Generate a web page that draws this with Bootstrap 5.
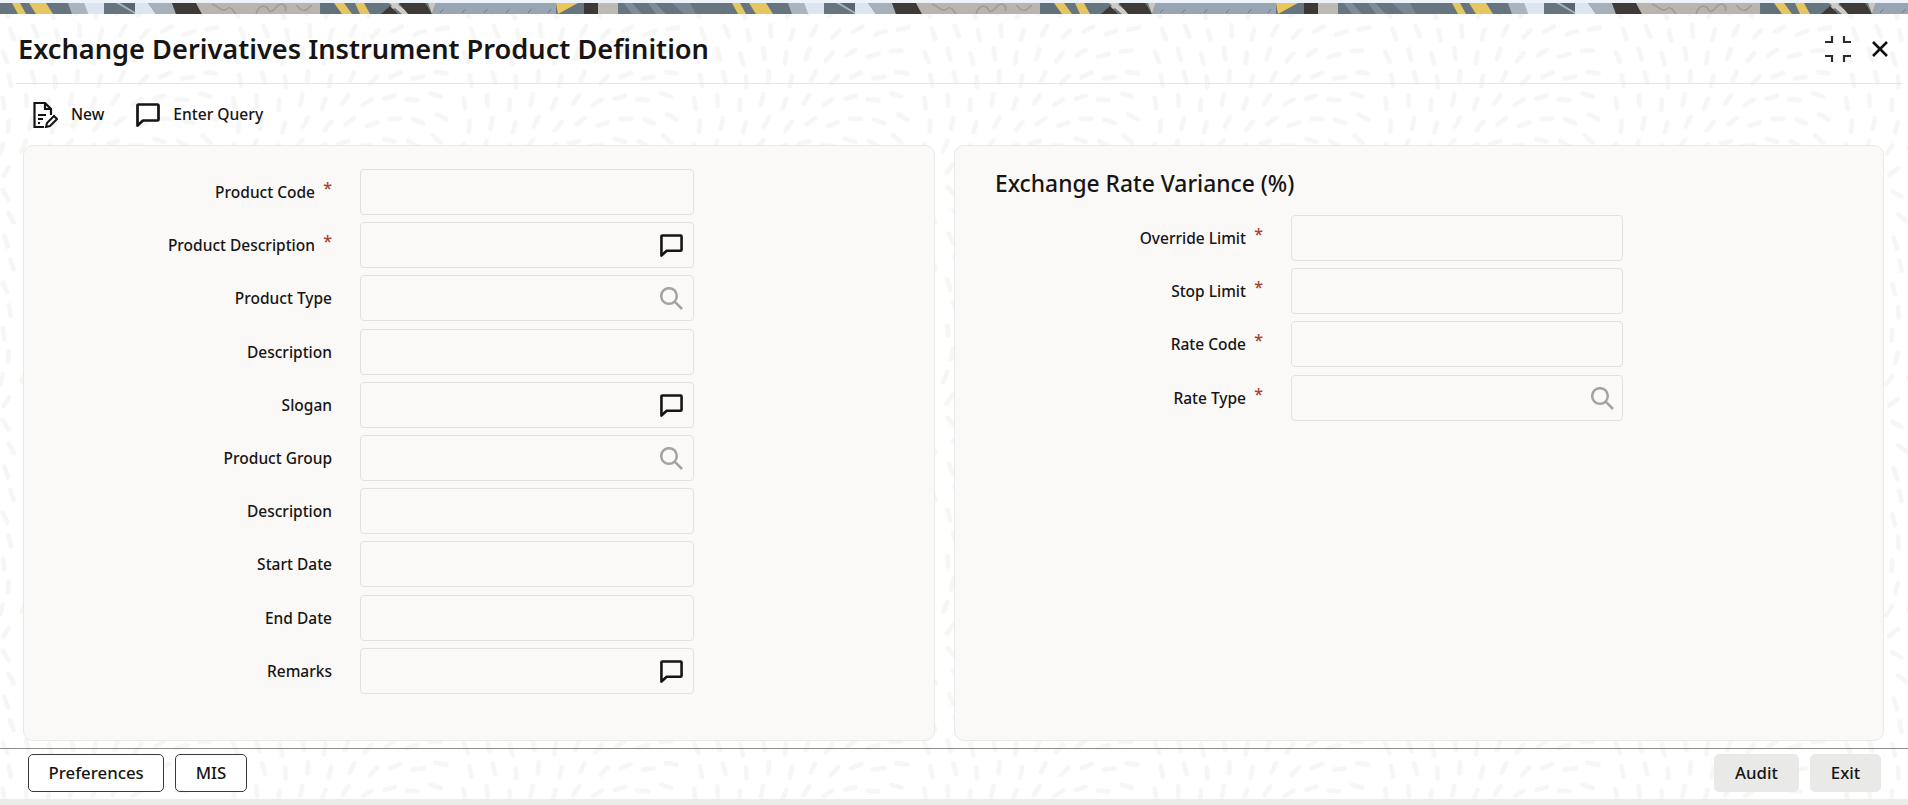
<!DOCTYPE html>
<html lang="en">
<head>
<meta charset="utf-8">
<title>Exchange Derivatives Instrument Product Definition</title>
<link href="https://cdn.jsdelivr.net/npm/bootstrap@5.3.0/dist/css/bootstrap.min.css" rel="stylesheet">
<style>
html{height:805px;overflow:hidden;background:#fff;}
body{height:805px;overflow:hidden;background:transparent;font-family:"Noto Sans","Open Sans",sans-serif;color:#161513;display:flex;flex-direction:column;}
.texture{position:absolute;top:0;left:0;width:100%;height:100%;z-index:-1;}
.strip-top{height:3px;background:#eef2f9;flex:none;}
.strip-art{display:block;width:100%;height:11px;flex:none;}
.head-bar{height:70px;margin:0 6px 0 16px;border-bottom:1px solid #e6e5e2;flex:none;padding-left:2px;padding-right:14px;}
.page-title{font-size:27.2px;font-weight:600;margin:2px 0 0;letter-spacing:0;color:#161513;}
.head-tools{gap:21px;}
.tool-bar{height:61px;padding-left:33px;gap:32px;flex:none;}
.tool-btn{font-size:15.6px;font-weight:500;color:#161513;gap:13px;background:none;border:0;padding:0;}
.panels{padding:0 24px 0 23px;gap:19px;height:596px;flex:none;}
.pane{background:#faf9f7;border:1px solid #ebe9e5;border-radius:10px;padding:23px 0 0 0;}
.pane-left{width:912px;flex:none;}
.pane-right{flex:1;}
.pane-head{font-size:22.8px;font-weight:500;margin:0 0 0 40px;height:46px;line-height:30px;color:#161513;}
.field-list{display:flex;flex-direction:column;gap:7.2px;}
.field-row{display:flex;align-items:center;}
.field-label{width:308px;display:flex;justify-content:flex-end;font-size:15.5px;font-weight:500;line-height:22px;margin:0;flex:none;}
.req-star{color:#a8402e;width:17px;text-align:right;font-size:16px;line-height:16px;align-self:flex-start;margin-top:-1px;font-weight:500;}
.field-box{width:334px;margin-left:28px;flex:none;position:relative;}
.pane-right .field-box{width:332px;}
.field-box .form-control{height:46px;background:#faf9f7;border:1px solid #e3e1dd;border-radius:4px;box-shadow:none;}
.field-icon{position:absolute;right:11px;top:12px;width:23px;height:23px;}
.pane-right .field-icon{right:9px;}
.foot-bar{border-top:1px solid #8d8c8a;margin-top:7px;height:51px;padding:5px 27px 0 28px;flex:none;}
.foot-gap{gap:11px;}
.foot-btn{height:38px;font-size:16.8px;font-weight:500;line-height:1;border-radius:5px;padding:0 19.5px;color:#161513;}
.foot-outline{background:#fff;border:1px solid #3b3a38;}
.foot-soft{background:#e9e9e7;border:1px solid #e9e9e7;padding:0;}
.foot-audit{width:85px;}
.foot-exit{width:71px;}
.strip-bottom{height:6px;background:#ececeb;flex:none;}
</style>
</head>
<body>
<svg class="texture" aria-hidden="true">
  <defs>
    <pattern id="dashes" width="320" height="320" patternUnits="userSpaceOnUse" patternTransform="scale(.72)">
      <path fill="none" stroke="#f6f6f5" stroke-width="6.500" stroke-linecap="round" d="
      M6 8l5 15M38 4l6 14M70 10l5 15M104 3l2 16M136 9l-3 15M168 5l-6 14M200 10l-8 12M232 4l-11 9M264 9l-13 7M298 6l-14 5
      M14 40l5 14M46 36l6 15M78 42l3 14M110 35l1 16M142 41l-4 14M174 36l-7 13M206 42l-10 10M238 37l-13 7M270 43l-14 5M302 38l-15 3
      M4 72l6 14M36 68l4 15M68 74l4 15M100 67l2 15M132 73l-2 15M164 68l-5 14M196 74l-9 11M228 69l-12 8M260 75l-15 4M292 70l-15 1
      M12 104l3 15M44 100l4 15M76 106l1 15M108 99l-1 15M140 105l-3 15M172 100l-6 13M204 106l-10 10M236 101l-14 6M268 107l-15 2M300 102l-15 -2
      M4 136l2 15M36 132l1 15M68 138l-1 15M100 131l-3 15M132 137l-5 14M164 132l-8 12M196 138l-12 8M228 133l-14 4M260 139l-15 -1M292 134l-14 -4
      M12 168l-1 15M44 164l-3 15M76 170l-4 14M108 163l-7 13M140 169l-9 12M172 164l-12 9M204 170l-14 5M236 165l-15 0M268 171l-14 -5M300 166l-13 -7
      M4 200l-4 14M36 196l-6 14M68 202l-8 12M100 195l-10 11M132 201l-13 7M164 196l-14 4M196 202l-15 0M228 197l-14 -4M260 203l-13 -7M292 198l-11 -10
      M12 232l-7 12M44 228l-9 12M76 234l-12 9M108 227l-14 5M140 233l-15 2M172 228l-15 -2M204 234l-13 -6M236 229l-11 -9M268 235l-9 -12M300 230l-7 -13
      M4 264l8 13M36 260l10 11M68 266l13 7M100 259l14 4M132 265l15 1M164 260l14 -3M196 266l11 -9M228 261l9 -12M260 267l6 -14M292 262l4 -15
      M12 296l7 13M44 292l9 12M76 298l12 9M108 291l14 5M140 297l15 1M172 292l13 -7M204 298l9 -12M236 293l6 -14M268 299l3 -15M300 294l1 -15"/>
    </pattern>
    <pattern id="bannerArt" width="720" height="11" patternUnits="userSpaceOnUse">
      <rect width="720" height="11" fill="#66757f"/>
      <polygon points="12,0 20,0 26,11 18,11" fill="#e6c660"/>
      <polygon points="29,0 46,0 53,11 36,11" fill="#e6c660"/>
      <polygon points="68,0 84,0 88,11 72,11" fill="#aab4bf"/>
      <polygon points="84,0 104,0 104,11 88,11" fill="#dce6f2"/>
      <polygon points="103,0 135,0 135,11 116,0" fill="#a9b2bc"/>
      <polygon points="120,0 135,0 135,9" fill="#58666f"/>
      <polygon points="135,0 148,0 156,11 135,11" fill="#dce6f2"/>
      <polygon points="148,0 172,0 176,11 156,11" fill="#a7b1bc"/>
      <polygon points="172,0 196,0 202,11 176,11" fill="#3f3a38"/>
      <polygon points="196,0 320,0 320,11 202,11" fill="#b9b5ae"/>
      <path fill="none" stroke="#9e9a94" stroke-width="1.5" d="M212 1c6 2 8 6 12 6s4-5 8-1l4 5M256 11c2-7 6-9 10-7s2 6 6 4 4-6 9-7c4 0 6 4 4 7M296 2c3 2 4 7 10 5l6-5"/>
      <polygon points="320,0 334,0 340,11 321,11" fill="#62727d"/>
      <polygon points="334,0 344,0 352,11 342,11" fill="#e6c660"/>
      <polygon points="355,0 364,0 370,11 360,11" fill="#e6c660"/>
      <polygon points="382,11 395,0 400,0 388,11" fill="#c9c5bd"/>
      <polygon points="381,11 390,3 398,11" fill="#3f3a38"/>
      <polygon points="389,0 396,0 410,11 402,11" fill="#cfcbc4"/>
      <polygon points="399,0 425,0 432,11 408,11" fill="#3e3a38"/>
      <polygon points="428,0 436,0 432,11" fill="#c9c5bd"/>
      <polygon points="436,0 556,0 556,11 432,11" fill="#98a5b4"/>
      <path fill="none" stroke="#6e7b89" stroke-width="1" stroke-dasharray="5 9" d="M440 10l8-9M462 10l8-9M484 10l8-9M506 10l8-9M528 10l8-9M548 10l5-6"/>
      <polygon points="556,0 578,0 558,11" fill="#e9c75c"/>
      <polygon points="584,0 598,0 598,11 584,11" fill="#3c3836"/>
      <polygon points="598,0 618,0 618,11 598,11" fill="#bdbab4"/>
      <polygon points="624,0 632,0 642,11 632,11" fill="#7f8d9a"/>
      <polygon points="648,0 655,0 666,11 656,11" fill="#7f8d9a"/>
      <polygon points="672,0 690,0 696,11 684,11" fill="#7a8895"/>
    </pattern>
  </defs>
  <rect y="14" width="100%" height="100%" fill="url(#dashes)"/>
</svg>

<div class="strip-top"></div>
<svg class="strip-art" aria-hidden="true"><rect width="100%" height="11" fill="url(#bannerArt)"/></svg>

<header class="head-bar d-flex align-items-center justify-content-between">
  <h1 class="page-title">Exchange Derivatives Instrument Product Definition</h1>
  <div class="head-tools d-flex align-items-center">
    <svg width="26" height="26" viewBox="0 0 26 26" fill="none" stroke="#2c2b29" stroke-width="2.200"><path d="M0 6h7V0M26 6h-7V0M0 20h7v6M26 20h-7v6"/></svg>
    <svg width="16" height="16" viewBox="0 0 16 16" fill="none" stroke="#111" stroke-width="2.600"><path d="M1 1l14 14M15 1L1 15"/></svg>
  </div>
</header>

<nav class="tool-bar d-flex align-items-center">
  <button type="button" class="tool-btn d-flex align-items-center">
    <svg width="25" height="26" viewBox="0 0 25 26" fill="none" stroke="#161513" stroke-width="2.200"><path d="M11 25H1.500V1H12l6 6v6M12 1v6h6"/><path d="M5 13h8M5 17h5M5 21h2"/><path d="M13 25l1-4 7-7 3 3-7 7z" stroke-width="2"/></svg>
    New
  </button>
  <button type="button" class="tool-btn d-flex align-items-center">
    <svg width="24" height="24" viewBox="0 0 24 24" fill="none" stroke="#161513" stroke-width="2.700" stroke-linejoin="round"><path d="M1.500 2.500a1 1 0 0 1 1-1h19a1 1 0 0 1 1 1v14a1 1 0 0 1-1 1H7l-5.500 5z"/></svg>
    Enter Query
  </button>
</nav>

<main class="panels d-flex">
  <section class="pane pane-left">
    <div class="field-list">
      <div class="field-row"><label class="field-label">Product Code<span class="req-star">*</span></label><div class="field-box"><input class="form-control" type="text"></div></div>
      <div class="field-row"><label class="field-label">Product Description<span class="req-star">*</span></label><div class="field-box"><input class="form-control" type="text"><svg class="field-icon" viewBox="0 0 24 24" fill="none" stroke="#161513" stroke-width="2.700" stroke-linejoin="round"><path d="M1.500 2.500a1 1 0 0 1 1-1h19a1 1 0 0 1 1 1v14a1 1 0 0 1-1 1H7l-5.500 5z"/></svg></div></div>
      <div class="field-row"><label class="field-label">Product Type</label><div class="field-box"><input class="form-control" type="text"><svg class="field-icon" viewBox="0 0 23 23" fill="none" stroke="#a5a3a0" stroke-width="2.500"><circle cx="9" cy="9" r="7.800"/><path d="M14.700 14.700l7.300 7.300"/></svg></div></div>
      <div class="field-row"><label class="field-label">Description</label><div class="field-box"><input class="form-control" type="text"></div></div>
      <div class="field-row"><label class="field-label">Slogan</label><div class="field-box"><input class="form-control" type="text"><svg class="field-icon" viewBox="0 0 24 24" fill="none" stroke="#161513" stroke-width="2.700" stroke-linejoin="round"><path d="M1.500 2.500a1 1 0 0 1 1-1h19a1 1 0 0 1 1 1v14a1 1 0 0 1-1 1H7l-5.500 5z"/></svg></div></div>
      <div class="field-row"><label class="field-label">Product Group</label><div class="field-box"><input class="form-control" type="text"><svg class="field-icon" viewBox="0 0 23 23" fill="none" stroke="#a5a3a0" stroke-width="2.500"><circle cx="9" cy="9" r="7.800"/><path d="M14.700 14.700l7.300 7.300"/></svg></div></div>
      <div class="field-row"><label class="field-label">Description</label><div class="field-box"><input class="form-control" type="text"></div></div>
      <div class="field-row"><label class="field-label">Start Date</label><div class="field-box"><input class="form-control" type="text"></div></div>
      <div class="field-row"><label class="field-label">End Date</label><div class="field-box"><input class="form-control" type="text"></div></div>
      <div class="field-row"><label class="field-label">Remarks</label><div class="field-box"><input class="form-control" type="text"><svg class="field-icon" viewBox="0 0 24 24" fill="none" stroke="#161513" stroke-width="2.700" stroke-linejoin="round"><path d="M1.500 2.500a1 1 0 0 1 1-1h19a1 1 0 0 1 1 1v14a1 1 0 0 1-1 1H7l-5.500 5z"/></svg></div></div>
    </div>
  </section>
  <section class="pane pane-right">
    <h2 class="pane-head">Exchange Rate Variance (%)</h2>
    <div class="field-list">
      <div class="field-row"><label class="field-label">Override Limit<span class="req-star">*</span></label><div class="field-box"><input class="form-control" type="text"></div></div>
      <div class="field-row"><label class="field-label">Stop Limit<span class="req-star">*</span></label><div class="field-box"><input class="form-control" type="text"></div></div>
      <div class="field-row"><label class="field-label">Rate Code<span class="req-star">*</span></label><div class="field-box"><input class="form-control" type="text"></div></div>
      <div class="field-row"><label class="field-label">Rate Type<span class="req-star">*</span></label><div class="field-box"><input class="form-control" type="text"><svg class="field-icon" viewBox="0 0 23 23" fill="none" stroke="#a5a3a0" stroke-width="2.500"><circle cx="9" cy="9" r="7.800"/><path d="M14.700 14.700l7.300 7.300"/></svg></div></div>
    </div>
  </section>
</main>

<footer class="foot-bar d-flex justify-content-between align-items-start">
  <div class="foot-gap d-flex">
    <button type="button" class="btn foot-btn foot-outline">Preferences</button>
    <button type="button" class="btn foot-btn foot-outline">MIS</button>
  </div>
  <div class="foot-gap d-flex">
    <button type="button" class="btn foot-btn foot-soft foot-audit">Audit</button>
    <button type="button" class="btn foot-btn foot-soft foot-exit">Exit</button>
  </div>
</footer>
<div class="strip-bottom"></div>
<script src="https://cdn.jsdelivr.net/npm/bootstrap@5.3.0/dist/js/bootstrap.bundle.min.js"></script>
</body>
</html>
